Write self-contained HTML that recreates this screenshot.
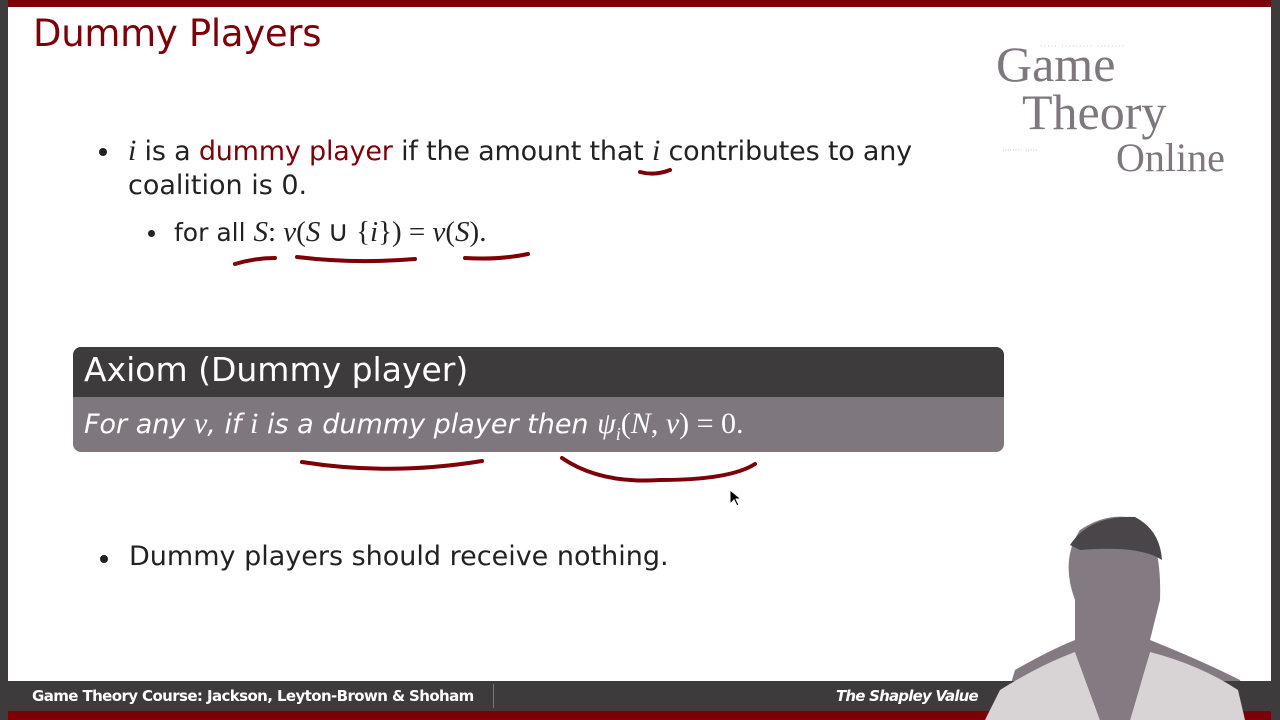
<!DOCTYPE html>
<html><head><meta charset="utf-8"><style>
*{margin:0;padding:0;box-sizing:border-box}
body{width:1280px;height:720px;overflow:hidden;background:#3d3b3c;position:relative;font-family:"DejaVu Sans","Liberation Sans",sans-serif}
#slide{position:absolute;left:8px;top:0;width:1263px;height:681px;background:#fff}
.top{position:absolute;left:8px;top:0;width:1263px;height:7px;background:#7d0008}
.t{position:absolute;white-space:nowrap}
.m{font-family:"Liberation Serif",serif;font-style:italic}
.dot{position:absolute;width:8px;height:8px;border-radius:50%;background:#222}
</style></head><body>
<div id="slide"></div>
<div class="top"></div>
<div class="t" style="left:33px;top:12px;font-size:37px;color:#7d0008;letter-spacing:-0.3px">Dummy Players</div>

<div class="t" style="left:996px;top:40px;font-family:'Liberation Serif',serif;font-size:50px;color:#7f777e;line-height:48px">Game</div>
<div class="t" style="left:1022px;top:88px;font-family:'Liberation Serif',serif;font-size:50px;color:#7f777e;line-height:48px">Theory</div>
<div class="t" style="left:1116px;top:138px;font-family:'Liberation Serif',serif;font-size:40px;color:#7f777e;line-height:40px">Online</div>
<div class="t" style="left:1040px;top:42px;font-size:8px;color:#bbb;letter-spacing:1px">····· ········· ········</div>
<div class="t" style="left:1002px;top:146px;font-size:8px;color:#bbb">········ ·····</div>

<div class="dot" style="left:99px;top:148px"></div>
<div class="t" style="left:128px;top:134px;font-size:27px;color:#222;letter-spacing:-0.2px"><span class="m" style="font-size:30px">i</span> is a <span style="color:#7d0008">dummy player</span> if the amount that <span class="m" style="font-size:30px">i</span> contributes to any</div>
<div class="t" style="left:128px;top:170px;font-size:27px;color:#222">coalition is 0.</div>
<div class="dot" style="left:148px;top:230px;width:7px;height:7px"></div>
<div class="t" style="left:174px;top:214px;font-size:25px;color:#222">for all <span style="font-family:'Liberation Serif',serif;font-size:29px"><i>S</i>: <i>v</i>(<i>S</i> ∪ {<i>i</i>}) = <i>v</i>(<i>S</i>).</span></div>

<div style="position:absolute;left:73px;top:347px;width:931px;height:105px;border-radius:8px;overflow:hidden;background:#7f777e">
<div style="height:50px;background:#3d3b3c"></div>
</div>
<div class="t" style="left:84px;top:350px;font-size:33px;color:#fff">Axiom (Dummy player)</div>
<div class="t" style="left:84px;top:407px;font-size:27px;color:#fff;font-style:italic">For any <span class="m" style="font-size:30px">v</span>, if <span class="m" style="font-size:30px">i</span> is a dummy player then <span style="font-family:'Liberation Serif',serif;font-size:30px;font-style:normal"><i>ψ<sub style="font-size:18px">i</sub></i>(<i>N</i>, <i>v</i>) = 0.</span></div>

<div class="dot" style="left:100px;top:555px"></div>
<div class="t" style="left:129px;top:541px;font-size:27px;color:#222">Dummy players should receive nothing.</div>

<svg style="position:absolute;left:0;top:0" width="1280" height="720">
<g fill="none" stroke="#7d0008" stroke-width="4" stroke-linecap="round">
<path d="M640 172 Q655 176 670 170"/>
<path d="M235 264 Q255 258 275 258"/>
<path d="M297 257 Q355 264 415 259"/>
<path d="M465 258 Q500 260 528 254"/>
<path d="M302 462 Q390 476 482 461"/>
<path d="M562 458 Q600 484 660 480 Q730 480 755 464"/>
</g>
<path d="M730 490 l0 14 l4 -4 l3 6 l2 -1 l-3 -6 l5 0 z" fill="#000" stroke="#fff" stroke-width="1"/>
<g>
<path d="M1000 720 L1015 670 Q1050 650 1075 640 L1075 600 Q1060 560 1080 530 Q1110 510 1140 520 Q1162 540 1160 600 L1150 640 Q1200 660 1240 680 L1250 720 Z" fill="#847b82"/>
<path d="M1070 545 Q1090 515 1135 517 Q1160 530 1162 560 Q1140 545 1080 550 Z" fill="#4a4548"/>
</g>
</svg>

<div style="position:absolute;left:8px;top:681px;width:1263px;height:30px;background:#3d3b3c"></div>
<div style="position:absolute;left:8px;top:711px;width:1263px;height:9px;background:#7d0008"></div>
<div style="position:absolute;left:493px;top:684px;width:1px;height:24px;background:#777"></div>
<div class="t" style="left:32px;top:687px;font-size:15px;color:#fff;font-weight:bold;letter-spacing:-0.6px">Game Theory Course: Jackson, Leyton-Brown &amp; Shoham</div>
<div class="t" style="left:836px;top:687px;font-size:15px;color:#fff;font-weight:bold;font-style:italic;letter-spacing:-0.8px">The Shapley Value</div>
<svg style="position:absolute;left:0;top:0" width="1280" height="720"><path d="M985 720 L1000 690 Q1040 665 1075 652 L1100 720 Z" fill="#d8d4d6"/><path d="M1245 720 L1238 690 Q1200 665 1150 652 L1130 720 Z" fill="#d8d4d6"/><path d="M1075 652 L1100 720 L1130 720 L1150 652 Z" fill="#847b82"/></svg>
</body></html>
